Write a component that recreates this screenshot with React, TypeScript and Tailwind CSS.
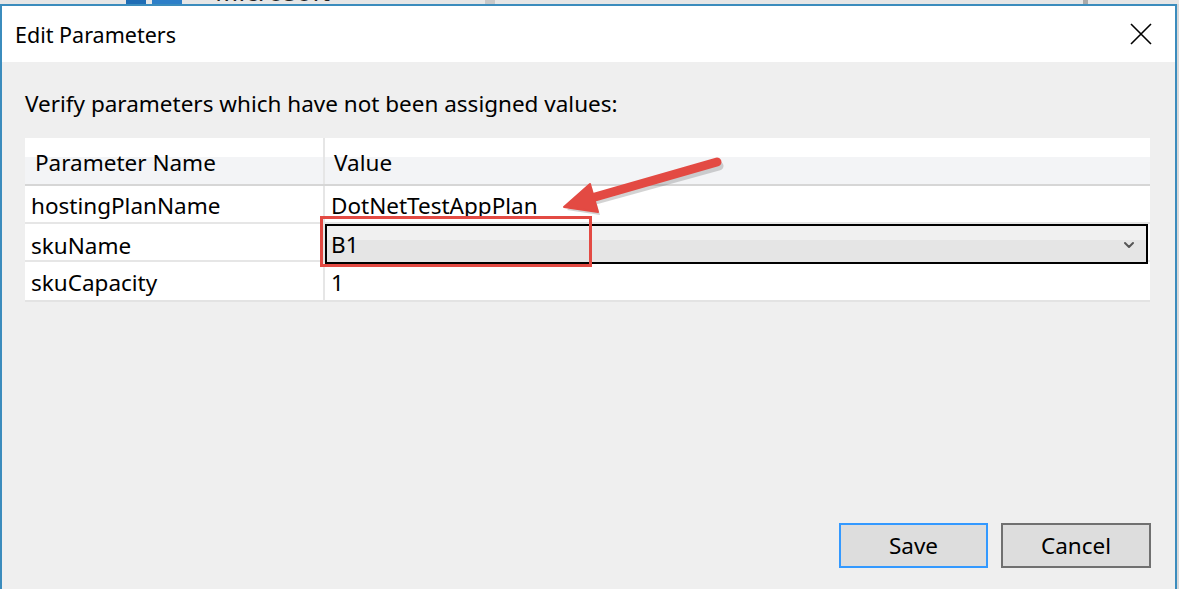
import { ChevronDown } from "lucide-react";

const rows = [
  { name: "hostingPlanName", value: "DotNetTestAppPlan" },
  { name: "skuName", value: "B1", combo: true },
  { name: "skuCapacity", value: "1" },
];

const font = { fontFamily: '"Noto Sans", "Open Sans", sans-serif' };

const App = () => {
  return (
    <div className="relative w-[1179px] h-[589px] overflow-hidden bg-[#d9d9d9]" style={font}>
      {/* app behind the dialog, only a sliver shows */}
      <div className="relative h-[4px] overflow-hidden bg-[#e6e6e6]">
        <div className="absolute left-[126px] top-[-14px] w-[20px] h-[18px] bg-[#1f6db5]" />
        <div className="absolute left-[152px] top-[-14px] w-[30px] h-[18px] bg-[#2d7fc8]" />
        <div className="absolute left-[215px] top-[-22px] text-[26px] leading-[26px] text-[#222]">Microsoft</div>
        <div className="absolute left-[485px] top-0 w-[10px] h-[4px] bg-[#c8c8c8]" />
        <div className="absolute left-[1083px] top-0 w-[5px] h-[4px] bg-[#a9a9a9]" />
      </div>

      {/* dialog */}
      <div className="flex flex-col w-[1177px] h-[585px] border-t-2 border-l-2 border-r-2 border-[#3b8cbd]">
        <div className="flex items-center justify-between h-[56px] bg-white pl-[13px] pr-[23px]">
          <span className="pt-[2px] text-[21.5px] text-black">Edit Parameters</span>
          <svg width="22" height="22" viewBox="0 0 22 22" className="text-black">
            <path d="M1 1 L21 21 M21 1 L1 21" stroke="currentColor" strokeWidth="1.6" fill="none" />
          </svg>
        </div>

        <div className="relative flex flex-col flex-1 bg-[#efefef] px-[23px]">
          <p className="mt-[28px] text-[22.5px] leading-[28px] text-black">
            Verify parameters which have not been assigned values:
          </p>

          <div className="mt-[20px] w-[1125px] border-b-2 border-[#e3e3e3]">
            {/* header */}
            <div className="grid grid-cols-[300px_1fr] h-[48px] border-b-2 border-[#d6d6d6] bg-[linear-gradient(#ffffff_0px,#ffffff_19px,#f3f4f6_19px)]">
              <div className="flex items-center pt-[3px] pl-[10px] border-r-2 border-[#e6e6e6] text-[22.5px] text-black">
                Parameter Name
              </div>
              <div className="flex items-center pt-[3px] pl-[9px] text-[22.5px] text-black">Value</div>
            </div>

            {rows.map((r, i) => (
              <div
                key={r.name}
                className={`grid grid-cols-[300px_1fr] h-[38px] bg-white ${i < rows.length - 1 ? "border-b-2 border-[#e6e6e6]" : ""}`}
              >
                <div className="flex items-center pt-[3px] pl-[6px] border-r-2 border-[#e6e6e6] text-[22.5px] text-black">
                  {r.name}
                </div>
                {r.combo ? (
                  <div className="flex items-center justify-between mr-[2px] border-2 border-black bg-[linear-gradient(#f0f0f0_0px,#f0f0f0_14px,#e5e5e5_14px)] pt-[2px] pl-[4px] pr-[9px] text-[22.5px] text-black">
                    {r.value}
                    <ChevronDown className="w-[16px] h-[16px] text-[#555]" strokeWidth={3} />
                  </div>
                ) : (
                  <div className="flex items-center pt-[3px] pl-[6px] text-[22.5px] text-black">{r.value}</div>
                )}
              </div>
            ))}
          </div>

          <div className="flex justify-end gap-[13px] mt-auto mb-[21px] pr-[1px]">
            <button className="w-[149px] h-[45px] border-2 border-[#3399ff] bg-[#dddddd] text-[22.5px] text-black">Save</button>
            <button className="w-[150px] h-[45px] border-2 border-[#707070] bg-[#dddddd] text-[22.5px] text-black">Cancel</button>
          </div>
        </div>
      </div>

      {/* annotation: red box */}
      <div className="absolute left-[320px] top-[216px] w-[272px] h-[51px] border-[3px] border-[#e34a43]" />

      {/* annotation: red arrow */}
      <svg className="absolute left-0 top-0" width="1179" height="589" viewBox="0 0 1179 589">
        <g opacity="0.25" transform="translate(2 3)">
          <path d="M590 198 L717 163" stroke="#555" strokeWidth="9" strokeLinecap="round" />
          <path d="M565 207 L590 185 L598 212 Z" fill="#555" />
        </g>
        <path d="M588 199 L717 162" stroke="#e34a43" strokeWidth="9" strokeLinecap="round" />
        <path d="M564 207 L590 184 L598 212 Z" fill="#e34a43" strokeLinejoin="round" stroke="#e34a43" strokeWidth="2" />
      </svg>
    </div>
  );
};

export default App;
